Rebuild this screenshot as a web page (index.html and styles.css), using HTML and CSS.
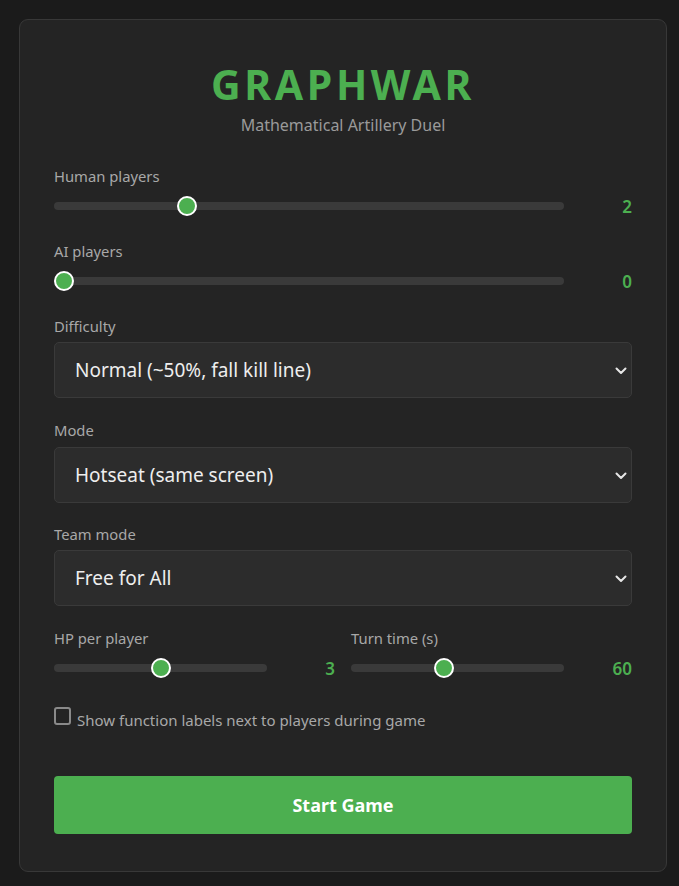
FILE: index.html
```html
<!DOCTYPE html>
<html lang="en">
<head>
<meta charset="utf-8">
<title>Graphwar</title>
<link rel="stylesheet" href="styles.css">
</head>
<body>
<main class="card">
  <header class="header">
    <h1 class="title">GRAPHWAR</h1>
    <p class="subtitle">Mathematical Artillery Duel</p>
  </header>

  <div class="field">
    <label class="label" for="human">Human players</label>
    <div class="slider-row">
      <input class="range" id="human" type="range" min="1" max="5" value="2">
      <span class="value">2</span>
    </div>
  </div>

  <div class="field">
    <label class="label" for="ai">AI players</label>
    <div class="slider-row">
      <input class="range" id="ai" type="range" min="0" max="4" value="0">
      <span class="value">0</span>
    </div>
  </div>

  <div class="field">
    <label class="label" for="difficulty">Difficulty</label>
    <div class="select-wrap">
      <select class="select" id="difficulty">
        <option>Normal (~50%, fall kill line)</option>
      </select>
      <svg class="chevron" width="12" height="8" viewBox="0 0 12 8"><path d="M1.5 1.5 L6 6 L10.5 1.5" fill="none" stroke="#e6e6e6" stroke-width="2" stroke-linecap="round" stroke-linejoin="round"/></svg>
    </div>
  </div>

  <div class="field field-select">
    <label class="label" for="mode">Mode</label>
    <div class="select-wrap">
      <select class="select" id="mode">
        <option>Hotseat (same screen)</option>
      </select>
      <svg class="chevron" width="12" height="8" viewBox="0 0 12 8"><path d="M1.5 1.5 L6 6 L10.5 1.5" fill="none" stroke="#e6e6e6" stroke-width="2" stroke-linecap="round" stroke-linejoin="round"/></svg>
    </div>
  </div>

  <div class="field">
    <label class="label" for="team">Team mode</label>
    <div class="select-wrap">
      <select class="select" id="team">
        <option>Free for All</option>
      </select>
      <svg class="chevron" width="12" height="8" viewBox="0 0 12 8"><path d="M1.5 1.5 L6 6 L10.5 1.5" fill="none" stroke="#e6e6e6" stroke-width="2" stroke-linecap="round" stroke-linejoin="round"/></svg>
    </div>
  </div>

  <div class="field two-col">
    <div class="col">
      <label class="label" for="hp">HP per player</label>
      <div class="slider-row">
        <input class="range" id="hp" type="range" min="1" max="5" value="3">
        <span class="value">3</span>
      </div>
    </div>
    <div class="col">
      <label class="label" for="turn">Turn time (s)</label>
      <div class="slider-row">
        <input class="range" id="turn" type="range" min="15" max="120" step="5" value="60">
        <span class="value">60</span>
      </div>
    </div>
  </div>

  <label class="check-row">
    <input class="checkbox" type="checkbox">
    <span class="check-text">Show function labels next to players during game</span>
  </label>

  <button class="start" type="button">Start Game</button>
</main>
</body>
</html>
```

FILE: styles.css
```css
* { box-sizing: border-box; }

html, body {
  margin: 0;
  padding: 0;
  background: #1b1b1b;
}

body {
  padding: 19px 12px 16px 19px;
  font-family: "Noto Sans", "Open Sans", "DejaVu Sans", sans-serif;
  color: #aaaaaa;
}

.card {
  width: 648px;
  background: #242424;
  border: 1px solid #383838;
  border-radius: 9px;
  padding: 41px 34px 37px;
  display: flex;
  flex-direction: column;
}

.header {
  text-align: center;
  margin-bottom: 31px;
}

.title {
  margin: 0;
  font-size: 41px;
  line-height: 46px;
  font-weight: 700;
  letter-spacing: 3.6px;
  color: #4caf50;
}

.subtitle {
  margin: 8px 0 0;
  font-size: 16px;
  line-height: 20px;
  color: #9a9a9a;
}

.field {
  margin-bottom: 22px;
}

.field-select {
  margin-bottom: 21px;
}

.label {
  display: block;
  font-size: 14.8px;
  line-height: 20px;
  color: #a8a8a8;
  margin-bottom: 6px;
}

.field-select .label {
  margin-bottom: 7px;
}

.slider-row {
  display: flex;
  align-items: center;
  gap: 16px;
  height: 27px;
}

.range {
  -webkit-appearance: none;
  appearance: none;
  flex: 1;
  min-width: 0;
  height: 8px;
  margin: 0;
  border-radius: 4px;
  background: #3a3a3a;
  outline: none;
}

.range::-webkit-slider-thumb {
  -webkit-appearance: none;
  appearance: none;
  width: 20px;
  height: 20px;
  border-radius: 50%;
  background: #4caf50;
  border: 2px solid #ffffff;
  cursor: pointer;
}

.range::-moz-range-thumb {
  width: 16px;
  height: 16px;
  border-radius: 50%;
  background: #4caf50;
  border: 2px solid #ffffff;
}

.value {
  width: 52px;
  text-align: right;
  font-size: 17px;
  font-weight: 600;
  color: #4caf50;
  line-height: 26px;
  padding-top: 2px;
}

.select-wrap {
  position: relative;
}

.select {
  -webkit-appearance: none;
  appearance: none;
  display: block;
  width: 100%;
  height: 56px;
  padding: 0 40px 0 20px;
  background: #2c2c2c;
  border: 1px solid #3a3a3a;
  border-radius: 5px;
  color: #eeeeee;
  font-family: inherit;
  font-size: 19px;
  outline: none;
}

.chevron {
  position: absolute;
  right: 5px;
  top: 25px;
  pointer-events: none;
}

.two-col {
  display: grid;
  grid-template-columns: 1fr 1fr;
  column-gap: 16px;
}

.check-row {
  display: flex;
  align-items: center;
  gap: 6px;
  margin-top: 4px;
  margin-bottom: 46px;
  font-size: 15px;
  color: #a8a8a8;
}

.checkbox {
  -webkit-appearance: none;
  appearance: none;
  width: 17px;
  height: 18px;
  margin: -6px 0 0 0;
  border: 2px solid #8a8a8a;
  border-radius: 3px;
  background: transparent;
}

.check-text {
  line-height: 20px;
  padding-top: 3px;
}

.start {
  display: block;
  width: 100%;
  height: 58px;
  border: none;
  border-radius: 4px;
  background: #4caf50;
  color: #ffffff;
  font-family: inherit;
  font-size: 18px;
  font-weight: 700;
  cursor: pointer;
}
```
